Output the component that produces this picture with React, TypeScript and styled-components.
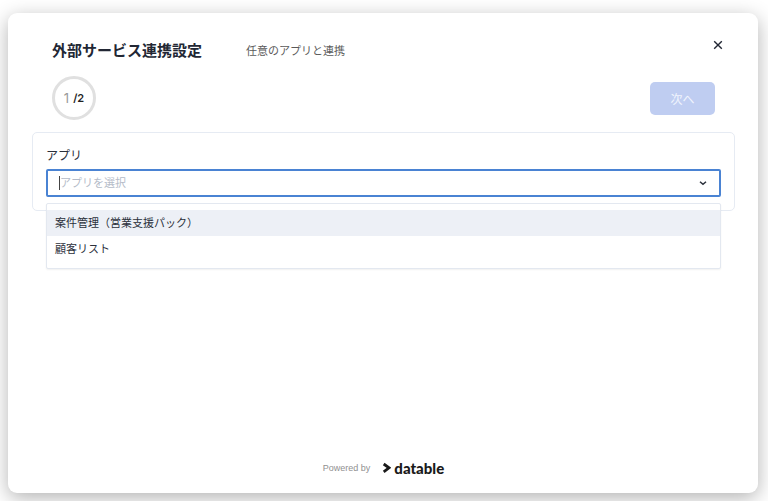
import React, { useState } from "react";
import styled, { createGlobalStyle } from "styled-components";

const GlobalStyle = createGlobalStyle`
  * { box-sizing: border-box; }
  body {
    margin: 0;
    background: #fff;
    color: #2b303b;
    font-family: "Liberation Sans", "Noto Sans CJK JP", sans-serif;
    -webkit-font-smoothing: antialiased;
  }
  button, input { font-family: inherit; }
`;

const Page = styled.div`
  display: flex;
  min-height: 100vh;
  padding: 13px 10px 8px 8px;
  overflow: hidden;
`;

const Dialog = styled.main`
  flex: 1;
  display: flex;
  flex-direction: column;
  padding: 24px 23px 16px 24px;
  border-radius: 9px;
  background: #fff;
  box-shadow: 0 5px 20px rgba(0, 0, 0, 0.3);
`;

const Header = styled.header`
  display: flex;
  align-items: flex-start;
  padding: 0 9px 0 20px;
`;

const Heading = styled.div`
  flex: 1;
  display: flex;
  align-items: center;
  gap: 44px;
  padding-top: 2px;
`;

const Title = styled.h1`
  margin: 0;
  font-size: 15px;
  line-height: 24px;
  font-weight: 700;
  color: #222734;
`;

const Subtitle = styled.p`
  margin: 0;
  font-size: 11px;
  line-height: 24px;
  color: #5a5a5a;
`;

const CloseButton = styled.button`
  display: flex;
  padding: 2px;
  border: 0;
  background: none;
  color: #222734;
  cursor: pointer;
`;

const StepBar = styled.div`
  display: flex;
  align-items: center;
  justify-content: space-between;
  margin-top: 13px;
  padding: 0 20px;
`;

const StepRing = styled.div`
  display: flex;
  align-items: center;
  justify-content: center;
  gap: 4px;
  width: 44px;
  height: 44px;
  border: 3px solid #e0e0e0;
  border-radius: 50%;
  font-family: Inter, sans-serif;
  font-size: 11px;
  line-height: 16px;
  font-weight: 600;
  color: #222;
`;

const CurrentStep = styled.span`
  font-size: 13px;
  font-weight: 400;
  color: #999;
`;

const NextButton = styled.button`
  width: 65px;
  height: 33px;
  padding: 0;
  border: 0;
  border-radius: 5px;
  background: #bfcdf1;
  color: #f0f4fd;
  font-size: 12px;
`;

const Panel = styled.section`
  margin-top: 12px;
  padding: 13px;
  border: 1px solid #e6ebf3;
  border-radius: 5px;
`;

const Label = styled.label`
  display: block;
  font-size: 12px;
  line-height: 20px;
  margin-bottom: 3px;
`;

const Combo = styled.div`
  position: relative;
`;

const Control = styled.div`
  display: flex;
  align-items: center;
  height: 28px;
  padding: 0 11px;
  border: 2px solid #4a83d3;
  border-radius: 2px;
`;

const Caret = styled.span`
  width: 1px;
  height: 14px;
  background: #444;
`;

const Field = styled.input`
  flex: 1;
  min-width: 0;
  padding: 0;
  border: 0;
  outline: 0;
  background: none;
  font-size: 11px;
  line-height: 20px;
  color: #2b303b;
  &::placeholder { color: #b4bbc8; opacity: 1; }
`;

const Menu = styled.ul`
  position: absolute;
  top: calc(100% + 6px);
  left: 0;
  right: 0;
  margin: 0;
  padding: 6px 0;
  list-style: none;
  border: 1px solid #e3e8f0;
  border-radius: 2px;
  background: #fff;
  box-shadow: 0 1px 2px rgba(0, 0, 0, 0.06);
`;

const Option = styled.li<{ $active: boolean }>`
  padding: 0 8px;
  font-size: 11px;
  line-height: 26px;
  background: ${(p) => (p.$active ? "#edf0f6" : "transparent")};
`;

const Footer = styled.footer`
  display: flex;
  align-items: center;
  justify-content: center;
  gap: 12px;
  margin-top: auto;
  font-size: 9px;
  color: #909090;
`;

const Brand = styled.span`
  display: flex;
  align-items: center;
  gap: 3px;
  font-family: Lato, sans-serif;
  font-size: 15px;
  line-height: 18px;
  font-weight: 900;
  color: #1a1a1a;
`;

const apps = ["案件管理（営業支援パック）", "顧客リスト"];

export default function App() {
  const [value, setValue] = useState("");
  const [active, setActive] = useState(0);
  return (
    <Page>
      <GlobalStyle />
      <Dialog>
        <Header>
          <Heading>
            <Title>外部サービス連携設定</Title>
            <Subtitle>任意のアプリと連携</Subtitle>
          </Heading>
          <CloseButton type="button" aria-label="閉じる">
            <svg width="12" height="12" viewBox="0 0 12 12" fill="none" stroke="currentColor" strokeWidth="1.4">
              <path d="M2.2 2.2l7.6 7.6M9.8 2.2l-7.6 7.6" />
            </svg>
          </CloseButton>
        </Header>
        <StepBar>
          <StepRing>
            <CurrentStep>1</CurrentStep>
            <span>/2</span>
          </StepRing>
          <NextButton type="button" disabled>次へ</NextButton>
        </StepBar>
        <Panel>
          <Label htmlFor="app">アプリ</Label>
          <Combo>
            <Control>
              {value === "" && <Caret />}
              <Field
                id="app"
                role="combobox"
                aria-expanded="true"
                aria-controls="app-options"
                placeholder="アプリを選択"
                value={value}
                onChange={(e) => setValue(e.target.value)}
              />
              <svg width="10" height="10" viewBox="0 0 10 10" fill="none" stroke="#2b303b" strokeWidth="1.5">
                <path d="M2 3.7l3 2.6 3-2.6" />
              </svg>
            </Control>
            <Menu id="app-options" role="listbox">
              {apps.map((name, i) => (
                <Option
                  key={name}
                  role="option"
                  aria-selected={i === active}
                  $active={i === active}
                  onMouseEnter={() => setActive(i)}
                  onClick={() => setValue(name)}
                >
                  {name}
                </Option>
              ))}
            </Menu>
          </Combo>
        </Panel>
        <Footer>
          <span>Powered by</span>
          <Brand>
            <svg width="9" height="12" viewBox="0 0 9 12" aria-hidden="true">
              <path d="M1.7 2L7 5.8 1.7 9.8" fill="none" stroke="#1a1a1a" strokeWidth="2.8" />
            </svg>
            datable
          </Brand>
        </Footer>
      </Dialog>
    </Page>
  );
}
